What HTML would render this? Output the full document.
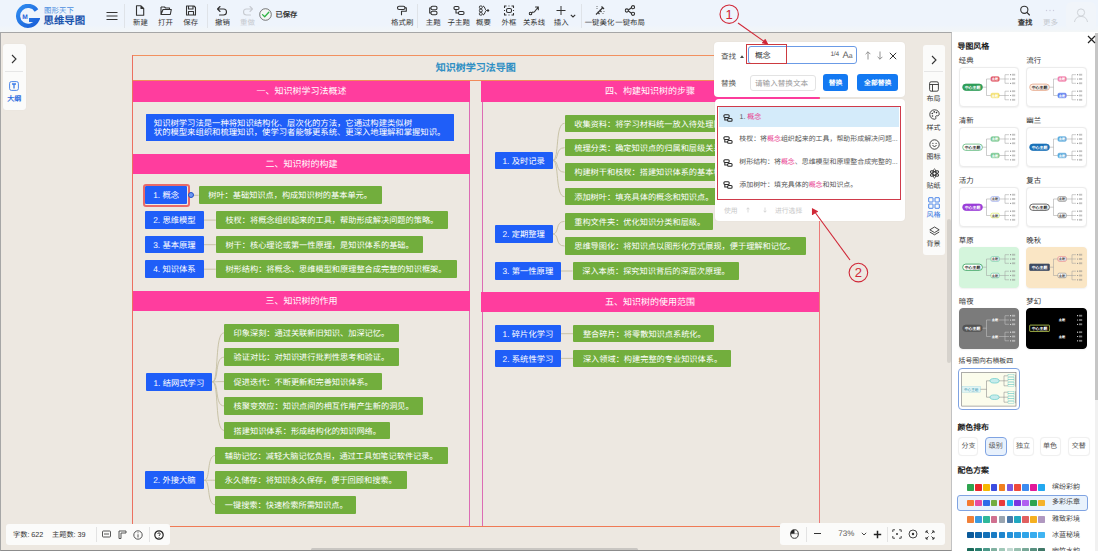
<!DOCTYPE html>
<html lang="zh-CN"><head><meta charset="utf-8">
<style>
*{margin:0;padding:0;box-sizing:border-box}
html,body{width:1098px;height:551px;overflow:hidden;text-rendering:geometricPrecision;font-family:"Liberation Sans",sans-serif;background:#ede8e1;position:relative}
.a{position:absolute}
#tb{left:0;top:0;width:1098px;height:33px;background:linear-gradient(#eef4fc 0,#eef4fc 25px,#f3f6f7 32px)}
.tl{position:absolute;top:17.8px;font-size:7.4px;color:#333;font-weight:500;white-space:nowrap;transform:translateX(-50%);line-height:9px}
.ti{position:absolute;top:5px;transform:translateX(-50%)}
.dv{position:absolute;top:4px;width:1px;height:24px;background:#dfe3e8}
#canvas{left:0;top:33px;width:951px;height:518px;background:#ede8e1}
.pk{background:#ff3d9e;color:#fff;font-size:9px;font-weight:500;text-align:center;white-space:nowrap}
.bn{background:#1f5ef8;color:#fff;font-size:8.3px;font-weight:500;padding-left:8px;white-space:nowrap;overflow:hidden;border-radius:1px}
.gn{background:#72ae3d;color:#fff;font-size:8.2px;font-weight:500;padding-left:9.6px;white-space:nowrap;overflow:hidden;border-radius:1px}
</style></head><body>
<!-- TOOLBAR -->
<div id="tb" class="a">
 <svg class="a" style="left:15px;top:4px" width="25" height="25" viewBox="0 0 25 25">
  <defs><linearGradient id="lg" x1="0" y1="0" x2="1" y2="1"><stop offset="0" stop-color="#2f8cf0"/><stop offset="1" stop-color="#1a5fd8"/></linearGradient></defs>
  <path d="M21.5 6.5 A10 10 0 1 0 22.2 16 L14 16" fill="none" stroke="url(#lg)" stroke-width="4.2"/>
  <text x="10" y="14.8" font-size="6.6" font-weight="bold" fill="#1a5fd8" text-anchor="middle" font-family="Liberation Sans">M</text>
 </svg>
 <div class="a" style="left:44px;top:5.7px;font-size:7.4px;color:#4d8fe0;line-height:9px;letter-spacing:0.1px">图形天下</div>
 <div class="a" style="left:43.5px;top:15.5px;font-size:10.4px;color:#1c55ae;font-weight:bold;line-height:12px">思维导图</div>
 <svg class="a" style="left:106px;top:11px" width="12" height="10"><path d="M0.5 1.5H11.5M0.5 5H11.5M0.5 8.5H11.5" stroke="#333" stroke-width="1.2"/></svg>
 <div class="dv" style="left:124px"></div>
 <!-- 新建 -->
 <svg class="ti" style="left:140.4px" width="10" height="11" viewBox="0 0 10 11"><path d="M1.5 0.8H6L8.7 3.5V10.2H1.5Z M6 0.8V3.5H8.7" fill="none" stroke="#333" stroke-width="1.1" stroke-linejoin="round"/></svg>
 <div class="tl" style="left:140.4px">新建</div>
 <svg class="ti" style="left:165.5px" width="12" height="11" viewBox="0 0 12 11"><path d="M1 2V9.5H10.3L11.3 4.5H3L1 9.5 M1 2H4.5L5.5 3H9.5V4.5" fill="none" stroke="#333" stroke-width="1.1" stroke-linejoin="round"/></svg>
 <div class="tl" style="left:165.5px">打开</div>
 <svg class="ti" style="left:190.7px" width="11" height="11" viewBox="0 0 11 11"><path d="M1 1H8.5L10 2.5V10H1Z M3 1V4H7.5V1 M3 10V6.5H8V10" fill="none" stroke="#333" stroke-width="1.1" stroke-linejoin="round"/></svg>
 <div class="tl" style="left:190.7px">保存</div>
 <div class="dv" style="left:207px"></div>
 <svg class="ti" style="left:222.4px" width="11" height="11" viewBox="0 0 11 11"><path d="M3.5 1.5L1 4L3.5 6.5 M1 4H7A3 3 0 0 1 7 10H3" fill="none" stroke="#333" stroke-width="1.1" stroke-linecap="round" stroke-linejoin="round"/></svg>
 <div class="tl" style="left:222.4px">撤销</div>
 <svg class="ti" style="left:247.5px" width="11" height="11" viewBox="0 0 11 11"><path d="M7.5 1.5L10 4L7.5 6.5 M10 4H4A3 3 0 0 0 4 10H8" fill="none" stroke="#c8ccd2" stroke-width="1.1" stroke-linecap="round" stroke-linejoin="round"/></svg>
 <div class="tl" style="left:247.5px;color:#c5c9cf">重做</div>
 <svg class="a" style="left:259px;top:8px" width="13" height="13" viewBox="0 0 13 13"><circle cx="6.5" cy="6.5" r="5.8" fill="#f4f7f4" stroke="#555" stroke-width="0.8"/><path d="M3.5 6.6L5.7 8.8L9.8 4.3" fill="none" stroke="#2fb344" stroke-width="1.3" stroke-linecap="round" stroke-linejoin="round"/></svg>
 <div class="a" style="left:275.5px;top:9.5px;font-size:7.3px;color:#333;font-weight:bold;line-height:9px">已保存</div>
 <!-- middle -->
 <svg class="ti" style="left:402.2px" width="11" height="11" viewBox="0 0 11 11"><rect x="1" y="1.2" width="7.5" height="3.3" rx="1.6" fill="none" stroke="#333" stroke-width="1.1"/><path d="M8.5 2.8H9.8V6.2H5V9.8" fill="none" stroke="#333" stroke-width="1.1" stroke-linejoin="round" stroke-linecap="round"/></svg>
 <div class="tl" style="left:402.2px">格式刷</div>
 <div class="dv" style="left:417.3px"></div>
 <svg class="ti" style="left:433.2px" width="11" height="11" viewBox="0 0 11 11"><rect x="3.5" y="1.3" width="6" height="3.4" rx="1.5" fill="none" stroke="#333" stroke-width="1.1"/><rect x="3.5" y="6.3" width="6" height="3.4" rx="1.5" fill="none" stroke="#333" stroke-width="1.1"/><path d="M3.5 3H2.2V8H3.5" fill="none" stroke="#333" stroke-width="1.1"/></svg>
 <div class="tl" style="left:433.2px">主题</div>
 <svg class="ti" style="left:458.7px" width="12" height="11" viewBox="0 0 12 11"><rect x="1" y="1.5" width="5" height="3" rx="1.2" fill="none" stroke="#333" stroke-width="1.1"/><rect x="5.5" y="6.5" width="5.5" height="3" rx="1.2" fill="none" stroke="#333" stroke-width="1.1"/><path d="M3 4.5V8H5.5" fill="none" stroke="#333" stroke-width="1.1"/></svg>
 <div class="tl" style="left:458.7px">子主题</div>
 <svg class="ti" style="left:483.5px" width="11" height="11" viewBox="0 0 11 11"><rect x="0.8" y="1" width="3" height="2.5" rx="1" fill="none" stroke="#333" stroke-width="1"/><rect x="0.8" y="4.3" width="3" height="2.5" rx="1" fill="none" stroke="#333" stroke-width="1"/><rect x="0.8" y="7.6" width="3" height="2.5" rx="1" fill="none" stroke="#333" stroke-width="1"/><path d="M4.5 1C6.5 1 6.5 5.5 8 5.5C6.5 5.5 6.5 10 4.5 10 M8 5.5H10.5 M9 4L10.5 5.5L9 7" fill="none" stroke="#333" stroke-width="1"/></svg>
 <div class="tl" style="left:483.5px">概要</div>
 <svg class="ti" style="left:509px" width="11" height="11" viewBox="0 0 11 11"><rect x="3" y="3.5" width="5" height="4" rx="1.5" fill="none" stroke="#333" stroke-width="1.1"/><path d="M1 3V1H3 M8 1H10V3 M10 8V10H8 M3 10H1V8 M5 1H6 M5 10H6 M1 5V6 M10 5V6" fill="none" stroke="#333" stroke-width="1.1"/></svg>
 <div class="tl" style="left:509px">外框</div>
 <svg class="ti" style="left:534px" width="11" height="11" viewBox="0 0 11 11"><circle cx="2" cy="8.5" r="1.3" fill="none" stroke="#333" stroke-width="1.1"/><path d="M3.2 7.6C5 6 5 9 7 5.5L9.8 2 M7 2H9.8V4.8" fill="none" stroke="#333" stroke-width="1.1" stroke-linecap="round"/></svg>
 <div class="tl" style="left:534px">关系线</div>
 <svg class="ti" style="left:561.2px" width="11" height="11" viewBox="0 0 11 11"><path d="M5.5 1V10 M1 5.5H10" stroke="#333" stroke-width="1"/></svg>
 <div class="tl" style="left:561.2px">插入</div>
 <svg class="a" style="left:569.5px;top:13.5px" width="6" height="4"><path d="M0.8 0.8L3 3L5.2 0.8" fill="none" stroke="#333" stroke-width="1.1"/></svg>
 <div class="dv" style="left:580.6px"></div>
 <svg class="ti" style="left:599.5px" width="11" height="11" viewBox="0 0 11 11"><path d="M1.5 9.5L8.5 2.5 M3 7L5 9 M5 5L7 7" fill="none" stroke="#333" stroke-width="1.1"/><path d="M2 2L3 1M3 3L2 4M8 8l1 1M9 7l1-1" stroke="#333" stroke-width="0.7"/><path d="M7 1.5L9.5 4" stroke="#333" stroke-width="1.3"/></svg>
 <div class="tl" style="left:599.5px">一键美化</div>
 <svg class="ti" style="left:630.1px" width="11" height="11" viewBox="0 0 11 11"><circle cx="2.3" cy="5.5" r="1.6" fill="none" stroke="#333" stroke-width="1.1"/><circle cx="8.5" cy="2.2" r="1.6" fill="none" stroke="#333" stroke-width="1.1"/><circle cx="8.5" cy="8.8" r="1.6" fill="none" stroke="#333" stroke-width="1.1"/><path d="M3.8 5L7 2.8 M3.8 6L7 8.2" stroke="#333" stroke-width="1.1"/></svg>
 <div class="tl" style="left:630.1px">一键布局</div>
 <!-- right -->
 <svg class="ti" style="left:1025.1px;top:5px" width="11" height="11" viewBox="0 0 11 11"><circle cx="4.8" cy="4.8" r="3.6" fill="none" stroke="#333" stroke-width="1.1"/><path d="M7.5 7.5L10 10" stroke="#333" stroke-width="1.1" stroke-linecap="round"/></svg>
 <div class="tl" style="left:1025.1px;font-weight:bold">查找</div>
 <svg class="ti" style="left:1050.4px;top:9px" width="10" height="3"><circle cx="1.5" cy="1.5" r="0.7" fill="#ccd"/><circle cx="5" cy="1.5" r="0.7" fill="#ccd"/><circle cx="8.5" cy="1.5" r="0.7" fill="#ccd"/></svg>
 <div class="tl" style="left:1050.4px;color:#c5c9cf">更多</div>
 <div class="a" style="left:1066px;top:2px;width:30px;height:28px;border-radius:6px;background:#f1f5fa"></div>
 <svg class="a" style="left:1073px;top:7px" width="16" height="16" viewBox="0 0 16 16"><circle cx="8" cy="5.5" r="3.6" fill="none" stroke="#cfd3d8" stroke-width="1"/><path d="M1.5 15C2.5 10.5 5 9.5 8 9.5S13.5 10.5 14.5 15" fill="none" stroke="#cfd3d8" stroke-width="1"/></svg>
</div>
<div id="canvas" class="a"></div>
<svg class="a" style="left:0;top:0" width="1098" height="551"><g fill="none" stroke="#c4bea0" stroke-width="0.9"><path d="M190 195.3H198.6"/><path d="M203.7 220.10000000000002H215.8"/><path d="M203.7 244.70000000000002H215.8"/><path d="M203.7 269.2H215.8"/><path d="M212.3 381.8C219.32 381.8 214.3 332.8 224 332.8"/><path d="M212.3 381.8C219.32 381.8 214.3 357.2 224 357.2"/><path d="M212.3 381.8C219.32 381.8 214.3 381.6 224 381.6"/><path d="M212.3 381.8C219.32 381.8 214.3 405.90000000000003 224 405.90000000000003"/><path d="M212.3 381.8C219.32 381.8 214.3 430.40000000000003 224 430.40000000000003"/><path d="M204.3 480.3C210.84 480.3 206.3 455.5 215.2 455.5"/><path d="M204.3 480.3C210.84 480.3 206.3 480.2 215.2 480.2"/><path d="M204.3 480.3C210.84 480.3 206.3 504.8 215.2 504.8"/><path d="M552.6 160.4C559.8000000000001 160.4 554.6 123.3 564.6 123.3"/><path d="M552.6 160.4C559.8000000000001 160.4 554.6 147.70000000000002 564.6 147.70000000000002"/><path d="M552.6 160.4C559.8000000000001 160.4 554.6 172.20000000000002 564.6 172.20000000000002"/><path d="M552.6 160.4C559.8000000000001 160.4 554.6 196.70000000000002 564.6 196.70000000000002"/><path d="M552.6 234C559.8000000000001 234 554.6 221.4 564.6 221.4"/><path d="M552.6 234C559.8000000000001 234 554.6 246.0 564.6 246.0"/><path d="M560.6 271H572.6"/><path d="M560.8 333.7H573.3"/><path d="M560.8 358.4H573.3"/></g></svg>
<div class="a" style="left:132px;top:55px;width:687.5px;height:472px;border:1px solid #f2905f"></div>
<div class="a" style="left:132px;top:56px;width:687.5px;height:25px;line-height:25px;text-align:center;font-size:10px;font-weight:bold;color:#2f8fc4">知识树学习法导图</div>
<div class="a" style="left:132px;top:80px;width:687.5px;height:1.2px;background:#f28a5a"></div>
<div class="a" style="left:469px;top:81px;width:1px;height:446px;background:#dc6cb4"></div>
<div class="a" style="left:481.5px;top:81px;width:1px;height:446px;background:#dc6cb4"></div>
<div class="a" style="left:132px;top:55px;width:1px;height:472px;background:#ec7060"></div>
<div class="a" style="left:818.5px;top:55px;width:1px;height:472px;background:#ec7a78"></div>
<div class="a" style="left:132px;top:526px;width:687.5px;height:1px;background:#f07a55"></div>
<div class="a pk" style="left:133px;top:81px;width:337px;height:20.5px;line-height:20.5px">一、知识树学习法概述</div>
<div class="a pk" style="left:133px;top:153.5px;width:337px;height:20.0px;line-height:20.0px">二、知识树的构建</div>
<div class="a pk" style="left:133px;top:291px;width:337px;height:20px;line-height:20px">三、知识树的作用</div>
<div class="a pk" style="left:481px;top:81px;width:338px;height:20.5px;line-height:20.5px">四、构建知识树的步骤</div>
<div class="a pk" style="left:481px;top:292px;width:338px;height:20px;line-height:20px">五、知识树的使用范围</div>
<div class="a bn" style="left:145.5px;top:114px;width:308.5px;height:27px;line-height:9.6px;padding:4.5px 0 0 8.3px;white-space:normal;font-size:8.33px;border-radius:0.5px">知识树学习法是一种将知识结构化、层次化的方法，它通过构建类似树<br>状的模型来组织和梳理知识，使学习者能够更系统、更深入地理解和掌握知识。</div>
<div class="a bn" style="left:145.2px;top:186.4px;width:42.0px;height:17.9px;line-height:19.9px">1. 概念</div>
<div class="a" style="left:142.5px;top:184px;width:47.5px;height:23.2px;border:2px solid #e86a6a;border-radius:3px"></div>
<div class="a gn" style="left:198.6px;top:186.4px;width:183.3px;height:17.6px;line-height:19.8px">树叶：基础知识点，构成知识树的基本单元。</div>
<div class="a" style="left:188.3px;top:192.4px;width:5.8px;height:5.8px;border-radius:3px;background:#6d9af2;border:1.4px solid #1f4fc8"></div>
<div class="a bn" style="left:145.2px;top:211.3px;width:58.5px;height:17.6px;line-height:19.6px">2. 思维模型</div>
<div class="a gn" style="left:215.8px;top:211.3px;width:232.4px;height:17.6px;line-height:19.8px">枝杈：将概念组织起来的工具，帮助形成解决问题的策略。</div>
<div class="a bn" style="left:145.2px;top:235.9px;width:58.5px;height:17.6px;line-height:19.6px">3. 基本原理</div>
<div class="a gn" style="left:215.8px;top:235.9px;width:207.7px;height:17.6px;line-height:19.8px">树干：核心理论或第一性原理，是知识体系的基础。</div>
<div class="a bn" style="left:145.2px;top:260.4px;width:58.5px;height:17.6px;line-height:19.6px">4. 知识体系</div>
<div class="a gn" style="left:215.8px;top:260.4px;width:241.0px;height:17.6px;line-height:19.8px">树形结构：将概念、思维模型和原理整合成完整的知识框架。</div>
<div class="a bn" style="left:145.5px;top:372.8px;width:66.8px;height:18.0px;line-height:20.0px">1. 结网式学习</div>
<div class="a gn" style="left:224px;top:324px;width:174.5px;height:17.6px;line-height:19.8px">印象深刻：通过关联新旧知识、加深记忆。</div>
<div class="a gn" style="left:224px;top:348.4px;width:174.5px;height:17.6px;line-height:19.8px">验证对比：对知识进行批判性思考和验证。</div>
<div class="a gn" style="left:224px;top:372.8px;width:157.7px;height:17.6px;line-height:19.8px">促进迭代：不断更新和完善知识体系。</div>
<div class="a gn" style="left:224px;top:397.1px;width:198.8px;height:17.6px;line-height:19.8px">核聚变效应：知识点间的相互作用产生新的洞见。</div>
<div class="a gn" style="left:224px;top:421.6px;width:165.7px;height:17.6px;line-height:19.8px">搭建知识体系：形成结构化的知识网络。</div>
<div class="a bn" style="left:145.2px;top:471.4px;width:59.1px;height:17.8px;line-height:19.8px">2. 外接大脑</div>
<div class="a gn" style="left:215.2px;top:446.7px;width:233.3px;height:17.6px;line-height:19.8px">辅助记忆：减轻大脑记忆负担，通过工具如笔记软件记录。</div>
<div class="a gn" style="left:215.2px;top:471.4px;width:191.7px;height:17.6px;line-height:19.8px">永久储存：将知识永久保存，便于回顾和搜索。</div>
<div class="a gn" style="left:215.2px;top:496px;width:140.5px;height:17.6px;line-height:19.8px">一键搜索：快速检索所需知识点。</div>
<div class="a bn" style="left:494.5px;top:151.6px;width:58.1px;height:17.6px;line-height:19.6px">1. 及时记录</div>
<div class="a gn" style="left:564.6px;top:114.5px;width:175.0px;height:17.6px;line-height:19.8px">收集资料：将学习材料统一放入待处理区。</div>
<div class="a gn" style="left:564.6px;top:138.9px;width:175.0px;height:17.6px;line-height:19.8px">梳理分类：确定知识点的归属和层级关系。</div>
<div class="a gn" style="left:564.6px;top:163.4px;width:183.2px;height:17.6px;line-height:19.8px">构建树干和枝杈：搭建知识体系的基本框架。</div>
<div class="a gn" style="left:564.6px;top:187.9px;width:158.6px;height:17.6px;line-height:19.8px">添加树叶：填充具体的概念和知识点。</div>
<div class="a bn" style="left:494.5px;top:225.2px;width:58.1px;height:17.6px;line-height:19.6px">2. 定期整理</div>
<div class="a gn" style="left:564.6px;top:212.6px;width:148.9px;height:17.6px;line-height:19.8px">重构文件夹：优化知识分类和层级。</div>
<div class="a gn" style="left:564.6px;top:237.2px;width:241.4px;height:17.6px;line-height:19.8px">思维导图化：将知识点以图形化方式展现，便于理解和记忆。</div>
<div class="a bn" style="left:494.5px;top:262.2px;width:66.1px;height:17.6px;line-height:19.6px">3. 第一性原理</div>
<div class="a gn" style="left:572.6px;top:262.2px;width:166.3px;height:17.6px;line-height:19.8px">深入本质：探究知识背后的深层次原理。</div>
<div class="a bn" style="left:494.6px;top:324.9px;width:66.2px;height:17.6px;line-height:19.6px">1. 碎片化学习</div>
<div class="a gn" style="left:573.3px;top:324.9px;width:141.0px;height:17.6px;line-height:19.8px">整合碎片：将零散知识点系统化。</div>
<div class="a bn" style="left:494.6px;top:349.6px;width:66.2px;height:17.6px;line-height:19.6px">2. 系统性学习</div>
<div class="a gn" style="left:573.3px;top:349.6px;width:158.0px;height:17.6px;line-height:19.8px">深入领域：构建完整的专业知识体系。</div>
<!-- left mini panel -->
<div class="a" style="left:3px;top:44px;width:22.5px;height:66px;background:#fbfbfa;border-radius:3px;box-shadow:0 0 1px rgba(0,0,0,0.08)"></div>
<svg class="a" style="left:10px;top:54px" width="8" height="10"><path d="M2 1L6 5L2 9" fill="none" stroke="#333" stroke-width="1.1"/></svg>
<div class="a" style="left:5px;top:71px;width:18px;height:1px;background:#e6e6e6"></div>
<svg class="a" style="left:9px;top:80.5px" width="10" height="10" viewBox="0 0 10 10"><rect x="0.6" y="0.6" width="8.8" height="8.8" rx="1.8" fill="none" stroke="#3a7be8" stroke-width="0.9"/><path d="M3 3H7M5 3V7.6" stroke="#3a7be8" stroke-width="1.3"/></svg>
<div class="a" style="left:3px;top:94.5px;width:22.5px;text-align:center;font-size:7px;line-height:9px;color:#2f6fe0;font-weight:bold">大纲</div>

<!-- right vertical toolbar -->
<div class="a" style="left:922.5px;top:44.5px;width:22px;height:210px;background:#fbfbfa;border-radius:3px"></div>
<svg class="a" style="left:929.5px;top:55px" width="8" height="10"><path d="M2 1L6 5L2 9" fill="none" stroke="#333" stroke-width="1.1"/></svg>
<div class="a" style="left:924px;top:70.5px;width:19px;height:1px;background:#e6e6e6"></div>
<svg class="a" style="left:928.5px;top:81px" width="10" height="11" viewBox="0 0 10 11"><rect x="0.6" y="0.8" width="8.8" height="9.4" rx="1.5" fill="none" stroke="#333" stroke-width="0.9"/><path d="M0.6 3.5H9.4M3.5 3.5V10.2" stroke="#333" stroke-width="0.9"/></svg>
<div class="a" style="left:922.5px;top:94.5px;width:22px;text-align:center;font-size:7px;line-height:9px;color:#333">布局</div>
<svg class="a" style="left:928.5px;top:109px" width="11" height="11" viewBox="0 0 11 11"><path d="M5.5 0.8C8.5 0.8 10.2 2.8 10.2 5C10.2 6.5 9 7 8 6.8C6.8 6.6 6.3 7.5 6.8 8.5C7.3 9.6 6.5 10.2 5.5 10.2C2.8 10.2 0.8 8 0.8 5.5C0.8 2.9 2.8 0.8 5.5 0.8Z" fill="none" stroke="#333" stroke-width="0.9"/><circle cx="3.3" cy="4.5" r="0.8" fill="#333"/><circle cx="5.2" cy="2.9" r="0.8" fill="#333"/><circle cx="7.5" cy="3.6" r="0.8" fill="#333"/><circle cx="3.5" cy="7" r="0.8" fill="#333"/></svg>
<div class="a" style="left:922.5px;top:124px;width:22px;text-align:center;font-size:7px;line-height:9px;color:#333">样式</div>
<svg class="a" style="left:928.5px;top:139px" width="11" height="11" viewBox="0 0 11 11"><circle cx="5.5" cy="5.5" r="4.7" fill="none" stroke="#333" stroke-width="0.9"/><circle cx="3.9" cy="4.3" r="0.6" fill="#333"/><circle cx="7.1" cy="4.3" r="0.6" fill="#333"/><path d="M3.5 6.5Q5.5 8.5 7.5 6.5" fill="none" stroke="#333" stroke-width="0.9"/></svg>
<div class="a" style="left:922.5px;top:153px;width:22px;text-align:center;font-size:7px;line-height:9px;color:#333">图标</div>
<svg class="a" style="left:928.5px;top:168px" width="11" height="11" viewBox="0 0 11 11"><g fill="none" stroke="#333" stroke-width="1"><ellipse cx="5.5" cy="5.5" rx="1.6" ry="4.5"/><ellipse cx="5.5" cy="5.5" rx="1.6" ry="4.5" transform="rotate(60 5.5 5.5)"/><ellipse cx="5.5" cy="5.5" rx="1.6" ry="4.5" transform="rotate(-60 5.5 5.5)"/></g></svg>
<div class="a" style="left:922.5px;top:182px;width:22px;text-align:center;font-size:7px;line-height:9px;color:#333">贴纸</div>
<svg class="a" style="left:928px;top:196.5px" width="12" height="12" viewBox="0 0 12 12"><g fill="none" stroke="#3a7be8" stroke-width="0.9"><rect x="0.7" y="0.7" width="4.3" height="4.3" rx="0.3"/><rect x="7" y="0.7" width="4.3" height="4.3" rx="0.3"/><rect x="0.7" y="7" width="4.3" height="4.3" rx="0.3"/><rect x="7" y="7" width="4.3" height="4.3" rx="0.3"/></g></svg>
<div class="a" style="left:922.5px;top:211px;width:22px;text-align:center;font-size:7px;line-height:9px;color:#2f6fe0">风格</div>
<svg class="a" style="left:928.5px;top:225.5px" width="11" height="11" viewBox="0 0 11 11"><g fill="none" stroke="#333" stroke-width="0.9" stroke-linejoin="round"><path d="M5.5 1L10.2 3.8L5.5 6.6L0.8 3.8Z"/><path d="M0.8 6L5.5 8.8L10.2 6"/></g></svg>
<div class="a" style="left:922.5px;top:239.5px;width:22px;text-align:center;font-size:7px;line-height:9px;color:#333">背景</div>

<!-- canvas scrollbars -->
<div class="a" style="left:947px;top:219px;width:3.5px;height:144px;background:#d6d2cc;border-radius:2px"></div>
<div class="a" style="left:311px;top:547.5px;width:327px;height:3.5px;background:#c9c6c2;border-radius:2px"></div>
<div class="a" style="left:0;top:32px;width:952px;height:519px;border:1px solid #a6a6a6;border-right:1.5px solid #c2c2c2;border-bottom:1.5px solid #8c8c8c"></div>

<!-- status bar -->
<div class="a" style="left:6px;top:523.7px;width:163.5px;height:21px;background:#fbfbfa;border-radius:3px"></div>
<div class="a" style="left:13px;top:530px;font-size:7.2px;line-height:9px;color:#333;white-space:nowrap">字数: 622</div>
<div class="a" style="left:52px;top:530px;font-size:7.2px;line-height:9px;color:#333;white-space:nowrap">主题数: 39</div>
<div class="a" style="left:95.5px;top:527px;width:1px;height:15px;background:#e3e3e3"></div>
<svg class="a" style="left:101.5px;top:530px" width="9" height="8" viewBox="0 0 9 8"><rect x="0.5" y="1" width="8" height="6" rx="0.8" fill="none" stroke="#444" stroke-width="0.9"/><path d="M2 4H7" stroke="#444" stroke-width="0.9"/></svg>
<svg class="a" style="left:117.5px;top:529.5px" width="9" height="9" viewBox="0 0 9 9"><path d="M1 8.5V1H8V3H3V8.5Z" fill="none" stroke="#444" stroke-width="0.9"/></svg>
<svg class="a" style="left:133px;top:529.5px" width="10" height="10" viewBox="0 0 10 10"><circle cx="5" cy="5" r="4.2" fill="none" stroke="#444" stroke-width="0.9"/><path d="M5 4.3V7.5" stroke="#444" stroke-width="0.9"/><circle cx="5" cy="2.8" r="0.5" fill="#444"/></svg>
<div class="a" style="left:149px;top:527px;width:1px;height:15px;background:#e3e3e3"></div>
<svg class="a" style="left:153.5px;top:529.5px" width="10" height="10" viewBox="0 0 10 10"><circle cx="5" cy="5" r="4.2" fill="none" stroke="#222" stroke-width="1.2"/><path d="M3.7 4C3.7 2.5 6.3 2.5 6.3 4C6.3 5 5 5 5 6" fill="none" stroke="#222" stroke-width="0.9"/><circle cx="5" cy="7.4" r="0.5" fill="#222"/></svg>

<!-- zoom bar -->
<div class="a" style="left:780px;top:523px;width:164.5px;height:21.5px;background:#fbfbfa;border-radius:3px"></div>
<svg class="a" style="left:789.5px;top:529.3px" width="9" height="10" viewBox="0 0 9 10"><ellipse cx="4.5" cy="5" rx="3.8" ry="4.3" fill="none" stroke="#333" stroke-width="1"/><path d="M4.5 4.7V0.7A3.8 4 0 0 0 0.7 4.7Z" fill="#222"/><path d="M0.7 4.7H8.3" stroke="#555" stroke-width="0.5"/></svg>
<div class="a" style="left:805.5px;top:527px;width:1px;height:15px;background:#e3e3e3"></div>
<div class="a" style="left:814px;top:532.9px;width:7px;height:1.6px;background:#333"></div>
<div class="a" style="left:838.3px;top:529px;font-size:8px;line-height:10px;color:#555;white-space:nowrap">73%</div>
<svg class="a" style="left:860.5px;top:532px" width="6" height="4"><path d="M0.8 0.8L3 3L5.2 0.8" fill="none" stroke="#333" stroke-width="0.9"/></svg>
<svg class="a" style="left:872.5px;top:529.5px" width="9" height="9"><path d="M4.5 0.8V8.2M0.8 4.5H8.2" stroke="#222" stroke-width="1.5"/></svg>
<div class="a" style="left:886.5px;top:527px;width:1px;height:15px;background:#e3e3e3"></div>
<svg class="a" style="left:892px;top:529px" width="10" height="10" viewBox="0 0 10 10"><path d="M0.8 3V0.8H3M7 0.8H9.2V3M9.2 7V9.2H7M3 9.2H0.8V7" fill="none" stroke="#333" stroke-width="0.9"/><circle cx="5" cy="5" r="1" fill="#333"/></svg>
<svg class="a" style="left:908px;top:529px" width="10" height="10" viewBox="0 0 10 10"><circle cx="5" cy="5" r="4" fill="none" stroke="#333" stroke-width="0.9"/><circle cx="5" cy="5" r="1.2" fill="#333"/></svg>
<svg class="a" style="left:925px;top:529.5px" width="10" height="10" viewBox="0 0 10 10"><path d="M1 1L3.5 3.5M9 1L6.5 3.5M1 9L3.5 6.5M9 9L6.5 6.5 M1 3V1H3 M7 1H9V3 M9 7V9H7 M3 9H1V7" fill="none" stroke="#333" stroke-width="0.95"/></svg>
<!-- search upper card -->
<div class="a" style="left:714px;top:41.5px;width:190.5px;height:55px;background:#fff;border-radius:4px;box-shadow:0 0 2px rgba(0,0,0,0.06)"></div>
<div class="a" style="left:721px;top:51.5px;font-size:7.6px;line-height:9px;color:#555;white-space:nowrap">查找</div>
<svg class="a" style="left:739.5px;top:54.5px" width="4" height="3"><path d="M0 3L2 0.3L4 3Z" fill="#444"/></svg>
<div class="a" style="left:748px;top:46.3px;width:109px;height:17.7px;border:1px solid #6b9be6;border-radius:3px;background:#fff"></div>
<div class="a" style="left:755px;top:51px;font-size:7.8px;line-height:9px;color:#333;white-space:nowrap">概念</div>
<div class="a" style="left:830.5px;top:51px;font-size:6.6px;line-height:8px;color:#555;white-space:nowrap;letter-spacing:-0.3px">1/4</div>
<div class="a" style="left:842.5px;top:50px;font-size:9.5px;line-height:11px;color:#666;white-space:nowrap">A<span style="font-size:7px">a</span></div>
<svg class="a" style="left:864.5px;top:51px" width="6" height="9"><path d="M3 8.5V0.8M0.6 3.2L3 0.8L5.4 3.2" fill="none" stroke="#888" stroke-width="0.9"/></svg>
<svg class="a" style="left:876.7px;top:51px" width="6" height="9"><path d="M3 0.5V8.2M0.6 5.8L3 8.2L5.4 5.8" fill="none" stroke="#888" stroke-width="0.9"/></svg>
<svg class="a" style="left:889px;top:52px" width="8" height="8"><path d="M0.8 0.8L7.2 7.2M7.2 0.8L0.8 7.2" stroke="#333" stroke-width="1"/></svg>
<div class="a" style="left:721px;top:78.5px;font-size:7.6px;line-height:9px;color:#555;white-space:nowrap">替换</div>
<div class="a" style="left:750px;top:74.6px;width:65.5px;height:16.5px;border:1px solid #e3e3e3;border-radius:3px;background:#fff"></div>
<div class="a" style="left:755px;top:78.5px;font-size:7.6px;line-height:9px;color:#999;white-space:nowrap">请输入替换文本</div>
<div class="a" style="left:823.3px;top:74px;width:24.5px;height:17.4px;background:#1379f2;border-radius:3px;color:#fff;font-size:6.8px;line-height:19.4px;text-align:center;font-weight:bold">替换</div>
<div class="a" style="left:857.2px;top:74px;width:41px;height:17.4px;background:#1379f2;border-radius:3px;color:#fff;font-size:6.8px;line-height:19.4px;text-align:center;font-weight:bold">全部替换</div>

<div class="a" style="left:746.2px;top:43.6px;width:40.5px;height:20.8px;border:1.6px solid #cc3a40"></div>
<!-- search lower card -->
<div class="a" style="left:714.5px;top:98.5px;width:190px;height:122.8px;background:#fff;border-radius:4px;box-shadow:0 0 2px rgba(0,0,0,0.06)"></div>
<div class="a" style="left:718.5px;top:107.3px;width:180px;height:20.2px;background:#d4ebfa"></div>
<div class="a" style="left:717px;top:106.2px;width:183.5px;height:93.6px;border:1.5px solid #cf3a4a"></div>
<svg class="a" style="left:723px;top:113.5px" width="10" height="8" viewBox="0 0 10 8"><g fill="none" stroke="#2a2a2a" stroke-width="1.05"><rect x="0.9" y="0.8" width="5.3" height="2.6" rx="1"/><rect x="4.6" y="4.5" width="4.5" height="2.8" rx="1"/><path d="M1.8 3.4V5.9H4.6"/></g></svg>
<div class="a" style="left:739.5px;top:113px;font-size:7px;line-height:9px;color:#555;white-space:nowrap">1. <span style="color:#e8408f">概念</span></div>
<svg class="a" style="left:723px;top:135.5px" width="10" height="8" viewBox="0 0 10 8"><g fill="none" stroke="#2a2a2a" stroke-width="1.05"><rect x="0.9" y="0.8" width="5.3" height="2.6" rx="1"/><rect x="4.6" y="4.5" width="4.5" height="2.8" rx="1"/><path d="M1.8 3.4V5.9H4.6"/></g></svg>
<div class="a" style="left:739.3px;top:135.2px;font-size:6.95px;line-height:9px;color:#555;white-space:nowrap">枝杈：将<span style="color:#e8408f">概念</span>组织起来的工具，帮助形成解决问题...</div>
<svg class="a" style="left:723px;top:158.5px" width="10" height="8" viewBox="0 0 10 8"><g fill="none" stroke="#2a2a2a" stroke-width="1.05"><rect x="0.9" y="0.8" width="5.3" height="2.6" rx="1"/><rect x="4.6" y="4.5" width="4.5" height="2.8" rx="1"/><path d="M1.8 3.4V5.9H4.6"/></g></svg>
<div class="a" style="left:739.3px;top:158.2px;font-size:6.95px;line-height:9px;color:#555;white-space:nowrap">树形结构：将<span style="color:#e8408f">概念</span>、思维模型和原理整合成完整的...</div>
<svg class="a" style="left:723px;top:180.5px" width="10" height="8" viewBox="0 0 10 8"><g fill="none" stroke="#2a2a2a" stroke-width="1.05"><rect x="0.9" y="0.8" width="5.3" height="2.6" rx="1"/><rect x="4.6" y="4.5" width="4.5" height="2.8" rx="1"/><path d="M1.8 3.4V5.9H4.6"/></g></svg>
<div class="a" style="left:739.3px;top:180.5px;font-size:6.95px;line-height:9px;color:#555;white-space:nowrap">添加树叶：填充具体的<span style="color:#e8408f">概念</span>和知识点。</div>
<div class="a" style="left:724px;top:206.5px;font-size:6.8px;line-height:9px;color:#c8c8c8;white-space:nowrap">使用</div>
<div class="a" style="left:741px;top:204px;width:14px;height:13px;border-radius:2px;background:#fff"></div>
<svg class="a" style="left:746px;top:207px" width="4" height="6"><path d="M2 5.5V0.8M0.5 2.3L2 0.8L3.5 2.3" fill="none" stroke="#ccc" stroke-width="0.7"/></svg>
<div class="a" style="left:758px;top:204px;width:14px;height:13px;border-radius:2px;background:#fff"></div>
<svg class="a" style="left:763px;top:207px" width="4" height="6"><path d="M2 0.5V5.2M0.5 3.7L2 5.2L3.5 3.7" fill="none" stroke="#ccc" stroke-width="0.7"/></svg>
<div class="a" style="left:775px;top:206.5px;font-size:6.8px;line-height:9px;color:#c8c8c8;white-space:nowrap">进行选择</div>

<!-- annotations -->
<svg class="a" style="left:0;top:0" width="1098" height="551"><g fill="none" stroke="#d02838" stroke-width="1.1">
<circle cx="729.2" cy="14.2" r="9.2"/>
<path d="M738 23L767 43.5"/>
<path d="M762 42.8L767.5 44L765 39.3" fill="#d02838"/>
<circle cx="858.4" cy="272.6" r="9.3"/>
<path d="M850 260L813 209.5"/>
<path d="M812.5 215L812.5 209L817.8 211.8" fill="#d02838"/>
</g>
<text x="729.2" y="19" font-size="13" text-anchor="middle" fill="#d02838" font-family="Liberation Sans">1</text>
<text x="858.4" y="277.4" font-size="13" text-anchor="middle" fill="#d02838" font-family="Liberation Sans">2</text>
</svg>
<div class="a" style="left:952px;top:32px;width:146px;height:519px;background:#fff"></div>
<div class="a" style="left:1094.5px;top:33px;width:3.5px;height:367px;background:#c6c6c6"></div>
<div class="a" style="left:1094.5px;top:400px;width:3.5px;height:151px;background:#f1f1f1"></div>
<svg class="a" style="left:1087px;top:35px" width="9" height="9"><path d="M1 1L8 8M8 1L1 8" stroke="#222" stroke-width="1.2"/></svg>
<div class="a" style="left:957.5px;top:41.5px;font-size:7.9px;line-height:10px;font-weight:bold;color:#222;white-space:nowrap">导图风格</div>
<div class="a" style="left:958.8px;top:55.5px;font-size:7.4px;line-height:9px;color:#333;white-space:nowrap;font-weight:normal">经典</div>
<div class="a" style="left:1026.3px;top:55.5px;font-size:7.4px;line-height:9px;color:#333;white-space:nowrap;font-weight:normal">流行</div>
<div class="a" style="left:958.8px;top:66.6px;width:60.5px;height:40.7px;background:#fff;border:1px solid #ececec;border-radius:4px;box-shadow:0 0.5px 1.5px rgba(0,0,0,0.06)"></div>
<svg class="a" style="left:958.8px;top:66.6px" width="60.5" height="40.7" viewBox="0 0 60.5 40.7"><rect x="3.7" y="17.1" width="19.7" height="6.3" rx="3.1" fill="#2f9d58" stroke="#2f9d58" stroke-width="0.8"/><text x="13.5" y="21.8" font-size="3.9" font-weight="bold" fill="#fff" text-anchor="middle">中心主题</text><path d="M23.4 20.2H27.5M27.5 12V28.5M27.5 12H32M27.5 28.5H32" fill="none" stroke="#999" stroke-width="0.5"/><rect x="32" y="9.7" width="8.2" height="4.6" rx="1.2" fill="#e05563" stroke="#e05563" stroke-width="0.6"/><text x="36" y="13.2" font-size="3.2" font-weight="bold" fill="#fff" text-anchor="middle">主题</text><path d="M40 12H46M46 7.7V16.3M46 7.7H50M46 12H50M46 16.3H50" fill="none" stroke="#999" stroke-width="0.5"/><circle cx="51.6" cy="7.7" r="0.6" fill="#888"/><rect x="53" y="6.8" width="3.2" height="1.8" fill="#888" opacity="0.5"/><circle cx="51.6" cy="12" r="0.6" fill="#888"/><rect x="53" y="11.1" width="3.2" height="1.8" fill="#888" opacity="0.5"/><circle cx="51.6" cy="16.3" r="0.6" fill="#888"/><rect x="53" y="15.4" width="3.2" height="1.8" fill="#888" opacity="0.5"/><rect x="32" y="26.2" width="8.2" height="4.6" rx="1.2" fill="#f4e16c" stroke="#f4e16c" stroke-width="0.6"/><text x="36" y="29.7" font-size="3.2" font-weight="bold" fill="#fff" text-anchor="middle">主题</text><path d="M40 28.5H46M46 24.2V32.8M46 24.2H50M46 28.5H50M46 32.8H50" fill="none" stroke="#999" stroke-width="0.5"/><circle cx="51.6" cy="24.2" r="0.6" fill="#888"/><rect x="53" y="23.3" width="3.2" height="1.8" fill="#888" opacity="0.5"/><circle cx="51.6" cy="28.5" r="0.6" fill="#888"/><rect x="53" y="27.6" width="3.2" height="1.8" fill="#888" opacity="0.5"/><circle cx="51.6" cy="32.8" r="0.6" fill="#888"/><rect x="53" y="31.9" width="3.2" height="1.8" fill="#888" opacity="0.5"/></svg>
<div class="a" style="left:1026.3px;top:66.6px;width:60.5px;height:40.7px;background:#fff;border:1px solid #ececec;border-radius:4px;box-shadow:0 0.5px 1.5px rgba(0,0,0,0.06)"></div>
<svg class="a" style="left:1026.3px;top:66.6px" width="60.5" height="40.7" viewBox="0 0 60.5 40.7"><rect x="3.7" y="17.1" width="19.7" height="6.3" rx="3.1" fill="#fdf1ea" stroke="#e4a486" stroke-width="0.8"/><text x="13.5" y="21.8" font-size="3.9" font-weight="bold" fill="#333" text-anchor="middle">中心主题</text><path d="M23.4 20.2H27.5M27.5 12V28.5M27.5 12H32M27.5 28.5H32" fill="none" stroke="#999" stroke-width="0.5"/><rect x="32" y="9.7" width="8.2" height="4.6" rx="1.2" fill="#f078a6" stroke="#f078a6" stroke-width="0.6"/><text x="36" y="13.2" font-size="3.2" font-weight="bold" fill="#fff" text-anchor="middle">主题</text><path d="M40 12H46M46 7.7V16.3M46 7.7H50M46 12H50M46 16.3H50" fill="none" stroke="#999" stroke-width="0.5"/><circle cx="51.6" cy="7.7" r="0.6" fill="#888"/><rect x="53" y="6.8" width="3.2" height="1.8" fill="#888" opacity="0.5"/><circle cx="51.6" cy="12" r="0.6" fill="#888"/><rect x="53" y="11.1" width="3.2" height="1.8" fill="#888" opacity="0.5"/><circle cx="51.6" cy="16.3" r="0.6" fill="#888"/><rect x="53" y="15.4" width="3.2" height="1.8" fill="#888" opacity="0.5"/><rect x="32" y="26.2" width="8.2" height="4.6" rx="1.2" fill="#5b7ef0" stroke="#5b7ef0" stroke-width="0.6"/><text x="36" y="29.7" font-size="3.2" font-weight="bold" fill="#fff" text-anchor="middle">主题</text><path d="M40 28.5H46M46 24.2V32.8M46 24.2H50M46 28.5H50M46 32.8H50" fill="none" stroke="#999" stroke-width="0.5"/><circle cx="51.6" cy="24.2" r="0.6" fill="#888"/><rect x="53" y="23.3" width="3.2" height="1.8" fill="#888" opacity="0.5"/><circle cx="51.6" cy="28.5" r="0.6" fill="#888"/><rect x="53" y="27.6" width="3.2" height="1.8" fill="#888" opacity="0.5"/><circle cx="51.6" cy="32.8" r="0.6" fill="#888"/><rect x="53" y="31.9" width="3.2" height="1.8" fill="#888" opacity="0.5"/></svg>
<div class="a" style="left:958.8px;top:115.5px;font-size:7.4px;line-height:9px;color:#333;white-space:nowrap;font-weight:normal">清新</div>
<div class="a" style="left:1026.3px;top:115.5px;font-size:7.4px;line-height:9px;color:#333;white-space:nowrap;font-weight:normal">幽兰</div>
<div class="a" style="left:958.8px;top:126.6px;width:60.5px;height:40.7px;background:#fff;border:1px solid #ececec;border-radius:4px;box-shadow:0 0.5px 1.5px rgba(0,0,0,0.06)"></div>
<svg class="a" style="left:958.8px;top:126.6px" width="60.5" height="40.7" viewBox="0 0 60.5 40.7"><rect x="3.7" y="17.1" width="19.7" height="6.3" rx="3.1" fill="#fff" stroke="#5db87b" stroke-width="0.8"/><text x="13.5" y="21.8" font-size="3.9" font-weight="bold" fill="#333" text-anchor="middle">中心主题</text><path d="M23.4 20.2H27.5M27.5 12V28.5M27.5 12H32M27.5 28.5H32" fill="none" stroke="#999" stroke-width="0.5"/><rect x="32" y="9.7" width="8.2" height="4.6" rx="1.2" fill="#78c890" stroke="#78c890" stroke-width="0.6"/><text x="36" y="13.2" font-size="3.2" font-weight="bold" fill="#fff" text-anchor="middle">主题</text><path d="M40 12H46M46 7.7V16.3M46 7.7H50M46 12H50M46 16.3H50" fill="none" stroke="#999" stroke-width="0.5"/><circle cx="51.6" cy="7.7" r="0.6" fill="#888"/><rect x="53" y="6.8" width="3.2" height="1.8" fill="#888" opacity="0.5"/><circle cx="51.6" cy="12" r="0.6" fill="#888"/><rect x="53" y="11.1" width="3.2" height="1.8" fill="#888" opacity="0.5"/><circle cx="51.6" cy="16.3" r="0.6" fill="#888"/><rect x="53" y="15.4" width="3.2" height="1.8" fill="#888" opacity="0.5"/><rect x="32" y="26.2" width="8.2" height="4.6" rx="1.2" fill="#78c890" stroke="#78c890" stroke-width="0.6"/><text x="36" y="29.7" font-size="3.2" font-weight="bold" fill="#fff" text-anchor="middle">主题</text><path d="M40 28.5H46M46 24.2V32.8M46 24.2H50M46 28.5H50M46 32.8H50" fill="none" stroke="#999" stroke-width="0.5"/><circle cx="51.6" cy="24.2" r="0.6" fill="#888"/><rect x="53" y="23.3" width="3.2" height="1.8" fill="#888" opacity="0.5"/><circle cx="51.6" cy="28.5" r="0.6" fill="#888"/><rect x="53" y="27.6" width="3.2" height="1.8" fill="#888" opacity="0.5"/><circle cx="51.6" cy="32.8" r="0.6" fill="#888"/><rect x="53" y="31.9" width="3.2" height="1.8" fill="#888" opacity="0.5"/></svg>
<div class="a" style="left:1026.3px;top:126.6px;width:60.5px;height:40.7px;background:#fff;border:1px solid #ececec;border-radius:4px;box-shadow:0 0.5px 1.5px rgba(0,0,0,0.06)"></div>
<svg class="a" style="left:1026.3px;top:126.6px" width="60.5" height="40.7" viewBox="0 0 60.5 40.7"><rect x="3.7" y="17.1" width="19.7" height="6.3" rx="3.1" fill="#1a71b8" stroke="#1a71b8" stroke-width="0.8"/><text x="13.5" y="21.8" font-size="3.9" font-weight="bold" fill="#fff" text-anchor="middle">中心主题</text><path d="M23.4 20.2H27.5M27.5 12V28.5M27.5 12H32M27.5 28.5H32" fill="none" stroke="#999" stroke-width="0.5"/><rect x="32" y="9.7" width="8.2" height="4.6" rx="1.2" fill="#58a8dc" stroke="#58a8dc" stroke-width="0.6"/><text x="36" y="13.2" font-size="3.2" font-weight="bold" fill="#fff" text-anchor="middle">主题</text><path d="M40 12H46M46 7.7V16.3M46 7.7H50M46 12H50M46 16.3H50" fill="none" stroke="#999" stroke-width="0.5"/><circle cx="51.6" cy="7.7" r="0.6" fill="#888"/><rect x="53" y="6.8" width="3.2" height="1.8" fill="#888" opacity="0.5"/><circle cx="51.6" cy="12" r="0.6" fill="#888"/><rect x="53" y="11.1" width="3.2" height="1.8" fill="#888" opacity="0.5"/><circle cx="51.6" cy="16.3" r="0.6" fill="#888"/><rect x="53" y="15.4" width="3.2" height="1.8" fill="#888" opacity="0.5"/><rect x="32" y="26.2" width="8.2" height="4.6" rx="1.2" fill="#58a8dc" stroke="#58a8dc" stroke-width="0.6"/><text x="36" y="29.7" font-size="3.2" font-weight="bold" fill="#fff" text-anchor="middle">主题</text><path d="M40 28.5H46M46 24.2V32.8M46 24.2H50M46 28.5H50M46 32.8H50" fill="none" stroke="#999" stroke-width="0.5"/><circle cx="51.6" cy="24.2" r="0.6" fill="#888"/><rect x="53" y="23.3" width="3.2" height="1.8" fill="#888" opacity="0.5"/><circle cx="51.6" cy="28.5" r="0.6" fill="#888"/><rect x="53" y="27.6" width="3.2" height="1.8" fill="#888" opacity="0.5"/><circle cx="51.6" cy="32.8" r="0.6" fill="#888"/><rect x="53" y="31.9" width="3.2" height="1.8" fill="#888" opacity="0.5"/></svg>
<div class="a" style="left:958.8px;top:175.5px;font-size:7.4px;line-height:9px;color:#333;white-space:nowrap;font-weight:normal">活力</div>
<div class="a" style="left:1026.3px;top:175.5px;font-size:7.4px;line-height:9px;color:#333;white-space:nowrap;font-weight:normal">复古</div>
<div class="a" style="left:958.8px;top:186.8px;width:60.5px;height:40.7px;background:#fff;border:1px solid #ececec;border-radius:4px;box-shadow:0 0.5px 1.5px rgba(0,0,0,0.06)"></div>
<svg class="a" style="left:958.8px;top:186.8px" width="60.5" height="40.7" viewBox="0 0 60.5 40.7"><rect x="3.7" y="17.1" width="19.7" height="6.3" rx="3.1" fill="#9a3ed8" stroke="#9a3ed8" stroke-width="0.8"/><text x="13.5" y="21.8" font-size="3.9" font-weight="bold" fill="#fff" text-anchor="middle">中心主题</text><path d="M23.4 20.2H27.5M27.5 12V28.5M27.5 12H32M27.5 28.5H32" fill="none" stroke="#999" stroke-width="0.5"/><rect x="32" y="9.7" width="8.2" height="4.6" rx="1.2" fill="#fff" stroke="#7b8ee8" stroke-width="0.6"/><text x="36" y="13.2" font-size="3.2" font-weight="bold" fill="#555" text-anchor="middle">主题</text><path d="M40 12H46M46 7.7V16.3M46 7.7H50M46 12H50M46 16.3H50" fill="none" stroke="#999" stroke-width="0.5"/><circle cx="51.6" cy="7.7" r="0.6" fill="#888"/><rect x="53" y="6.8" width="3.2" height="1.8" fill="#888" opacity="0.5"/><circle cx="51.6" cy="12" r="0.6" fill="#888"/><rect x="53" y="11.1" width="3.2" height="1.8" fill="#888" opacity="0.5"/><circle cx="51.6" cy="16.3" r="0.6" fill="#888"/><rect x="53" y="15.4" width="3.2" height="1.8" fill="#888" opacity="0.5"/><rect x="32" y="26.2" width="8.2" height="4.6" rx="1.2" fill="#fff" stroke="#d4e84a" stroke-width="0.6"/><text x="36" y="29.7" font-size="3.2" font-weight="bold" fill="#555" text-anchor="middle">主题</text><path d="M40 28.5H46M46 24.2V32.8M46 24.2H50M46 28.5H50M46 32.8H50" fill="none" stroke="#999" stroke-width="0.5"/><circle cx="51.6" cy="24.2" r="0.6" fill="#888"/><rect x="53" y="23.3" width="3.2" height="1.8" fill="#888" opacity="0.5"/><circle cx="51.6" cy="28.5" r="0.6" fill="#888"/><rect x="53" y="27.6" width="3.2" height="1.8" fill="#888" opacity="0.5"/><circle cx="51.6" cy="32.8" r="0.6" fill="#888"/><rect x="53" y="31.9" width="3.2" height="1.8" fill="#888" opacity="0.5"/></svg>
<div class="a" style="left:1026.3px;top:186.8px;width:60.5px;height:40.7px;background:#fff;border:1px solid #ececec;border-radius:4px;box-shadow:0 0.5px 1.5px rgba(0,0,0,0.06)"></div>
<svg class="a" style="left:1026.3px;top:186.8px" width="60.5" height="40.7" viewBox="0 0 60.5 40.7"><rect x="3.7" y="17.1" width="19.7" height="6.3" rx="3.1" fill="#fff" stroke="#444" stroke-width="0.8"/><text x="13.5" y="21.8" font-size="3.9" font-weight="bold" fill="#333" text-anchor="middle">中心主题</text><path d="M23.4 20.2H27.5M27.5 12V28.5M27.5 12H32M27.5 28.5H32" fill="none" stroke="#999" stroke-width="0.5"/><rect x="32" y="9.7" width="8.2" height="4.6" rx="1.2" fill="#fff" stroke="#666" stroke-width="0.6"/><text x="36" y="13.2" font-size="3.2" font-weight="bold" fill="#555" text-anchor="middle">主题</text><path d="M40 12H46M46 7.7V16.3M46 7.7H50M46 12H50M46 16.3H50" fill="none" stroke="#999" stroke-width="0.5"/><circle cx="51.6" cy="7.7" r="0.6" fill="#888"/><rect x="53" y="6.8" width="3.2" height="1.8" fill="#888" opacity="0.5"/><circle cx="51.6" cy="12" r="0.6" fill="#888"/><rect x="53" y="11.1" width="3.2" height="1.8" fill="#888" opacity="0.5"/><circle cx="51.6" cy="16.3" r="0.6" fill="#888"/><rect x="53" y="15.4" width="3.2" height="1.8" fill="#888" opacity="0.5"/><rect x="32" y="26.2" width="8.2" height="4.6" rx="1.2" fill="#fff" stroke="#666" stroke-width="0.6"/><text x="36" y="29.7" font-size="3.2" font-weight="bold" fill="#555" text-anchor="middle">主题</text><path d="M40 28.5H46M46 24.2V32.8M46 24.2H50M46 28.5H50M46 32.8H50" fill="none" stroke="#999" stroke-width="0.5"/><circle cx="51.6" cy="24.2" r="0.6" fill="#888"/><rect x="53" y="23.3" width="3.2" height="1.8" fill="#888" opacity="0.5"/><circle cx="51.6" cy="28.5" r="0.6" fill="#888"/><rect x="53" y="27.6" width="3.2" height="1.8" fill="#888" opacity="0.5"/><circle cx="51.6" cy="32.8" r="0.6" fill="#888"/><rect x="53" y="31.9" width="3.2" height="1.8" fill="#888" opacity="0.5"/></svg>
<div class="a" style="left:958.8px;top:235.5px;font-size:7.4px;line-height:9px;color:#333;white-space:nowrap;font-weight:normal">草原</div>
<div class="a" style="left:1026.3px;top:235.5px;font-size:7.4px;line-height:9px;color:#333;white-space:nowrap;font-weight:normal">晚秋</div>
<div class="a" style="left:958.8px;top:247px;width:60.5px;height:40.7px;background:#d4f5dc;border:1px solid #d4f5dc;border-radius:4px;box-shadow:0 0.5px 1.5px rgba(0,0,0,0.06)"></div>
<svg class="a" style="left:958.8px;top:247px" width="60.5" height="40.7" viewBox="0 0 60.5 40.7"><rect x="3.7" y="17.1" width="19.7" height="6.3" rx="3.1" fill="#fff" stroke="#2f9d58" stroke-width="0.8"/><text x="13.5" y="21.8" font-size="3.9" font-weight="bold" fill="#333" text-anchor="middle">中心主题</text><path d="M23.4 20.2H27.5M27.5 12V28.5M27.5 12H32M27.5 28.5H32" fill="none" stroke="#999" stroke-width="0.5"/><rect x="32" y="9.7" width="8.2" height="4.6" rx="1.2" fill="#fff" stroke="#5bbf9a" stroke-width="0.6"/><text x="36" y="13.2" font-size="3.2" font-weight="bold" fill="#555" text-anchor="middle">主题</text><path d="M40 12H46M46 7.7V16.3M46 7.7H50M46 12H50M46 16.3H50" fill="none" stroke="#999" stroke-width="0.5"/><circle cx="51.6" cy="7.7" r="0.6" fill="#888"/><rect x="53" y="6.8" width="3.2" height="1.8" fill="#888" opacity="0.5"/><circle cx="51.6" cy="12" r="0.6" fill="#888"/><rect x="53" y="11.1" width="3.2" height="1.8" fill="#888" opacity="0.5"/><circle cx="51.6" cy="16.3" r="0.6" fill="#888"/><rect x="53" y="15.4" width="3.2" height="1.8" fill="#888" opacity="0.5"/><rect x="32" y="26.2" width="8.2" height="4.6" rx="1.2" fill="#fff" stroke="#5bbf9a" stroke-width="0.6"/><text x="36" y="29.7" font-size="3.2" font-weight="bold" fill="#555" text-anchor="middle">主题</text><path d="M40 28.5H46M46 24.2V32.8M46 24.2H50M46 28.5H50M46 32.8H50" fill="none" stroke="#999" stroke-width="0.5"/><circle cx="51.6" cy="24.2" r="0.6" fill="#888"/><rect x="53" y="23.3" width="3.2" height="1.8" fill="#888" opacity="0.5"/><circle cx="51.6" cy="28.5" r="0.6" fill="#888"/><rect x="53" y="27.6" width="3.2" height="1.8" fill="#888" opacity="0.5"/><circle cx="51.6" cy="32.8" r="0.6" fill="#888"/><rect x="53" y="31.9" width="3.2" height="1.8" fill="#888" opacity="0.5"/></svg>
<div class="a" style="left:1026.3px;top:247px;width:60.5px;height:40.7px;background:#fae6c5;border:1px solid #fae6c5;border-radius:4px;box-shadow:0 0.5px 1.5px rgba(0,0,0,0.06)"></div>
<svg class="a" style="left:1026.3px;top:247px" width="60.5" height="40.7" viewBox="0 0 60.5 40.7"><rect x="3.7" y="17.1" width="19.7" height="6.3" rx="0.5" fill="#3d4a62" stroke="#3d4a62" stroke-width="0.8"/><text x="13.5" y="21.8" font-size="3.9" font-weight="bold" fill="#fff" text-anchor="middle">中心主题</text><path d="M23.4 20.2H27.5M27.5 12V28.5M27.5 12H32M27.5 28.5H32" fill="none" stroke="#999" stroke-width="0.5"/><rect x="32" y="9.7" width="8.2" height="4.6" rx="1.2" fill="#fff" stroke="#e06a78" stroke-width="0.6"/><text x="36" y="13.2" font-size="3.2" font-weight="bold" fill="#555" text-anchor="middle">主题</text><path d="M40 12H46M46 7.7V16.3M46 7.7H50M46 12H50M46 16.3H50" fill="none" stroke="#999" stroke-width="0.5"/><circle cx="51.6" cy="7.7" r="0.6" fill="#888"/><rect x="53" y="6.8" width="3.2" height="1.8" fill="#888" opacity="0.5"/><circle cx="51.6" cy="12" r="0.6" fill="#888"/><rect x="53" y="11.1" width="3.2" height="1.8" fill="#888" opacity="0.5"/><circle cx="51.6" cy="16.3" r="0.6" fill="#888"/><rect x="53" y="15.4" width="3.2" height="1.8" fill="#888" opacity="0.5"/><rect x="32" y="26.2" width="8.2" height="4.6" rx="1.2" fill="#fff" stroke="#888" stroke-width="0.6"/><text x="36" y="29.7" font-size="3.2" font-weight="bold" fill="#555" text-anchor="middle">主题</text><path d="M40 28.5H46M46 24.2V32.8M46 24.2H50M46 28.5H50M46 32.8H50" fill="none" stroke="#999" stroke-width="0.5"/><circle cx="51.6" cy="24.2" r="0.6" fill="#888"/><rect x="53" y="23.3" width="3.2" height="1.8" fill="#888" opacity="0.5"/><circle cx="51.6" cy="28.5" r="0.6" fill="#888"/><rect x="53" y="27.6" width="3.2" height="1.8" fill="#888" opacity="0.5"/><circle cx="51.6" cy="32.8" r="0.6" fill="#888"/><rect x="53" y="31.9" width="3.2" height="1.8" fill="#888" opacity="0.5"/></svg>
<div class="a" style="left:958.8px;top:296.5px;font-size:7.4px;line-height:9px;color:#333;white-space:nowrap;font-weight:normal">暗夜</div>
<div class="a" style="left:1026.3px;top:296.5px;font-size:7.4px;line-height:9px;color:#333;white-space:nowrap;font-weight:normal">梦幻</div>
<div class="a" style="left:958.8px;top:308.4px;width:60.5px;height:40.7px;background:#7b7b7b;border:1px solid #7b7b7b;border-radius:4px;box-shadow:0 0.5px 1.5px rgba(0,0,0,0.06)"></div>
<svg class="a" style="left:958.8px;top:308.4px" width="60.5" height="40.7" viewBox="0 0 60.5 40.7"><rect x="3.7" y="17.1" width="19.7" height="6.3" rx="3.1" fill="#555" stroke="#555" stroke-width="0.8"/><text x="13.5" y="21.8" font-size="3.9" font-weight="bold" fill="#fff" text-anchor="middle">中心主题</text><path d="M23.4 20.2H27.5M27.5 12V28.5M27.5 12H32M27.5 28.5H32" fill="none" stroke="#cfcfcf" stroke-width="0.5"/><rect x="32" y="9.7" width="8.2" height="4.6" rx="1.2" fill="#7b7b7b" stroke="#7b7b7b" stroke-width="0.6"/><text x="36" y="13.2" font-size="3.2" font-weight="bold" fill="#fff" text-anchor="middle">主题</text><path d="M40 12H46M46 7.7V16.3M46 7.7H50M46 12H50M46 16.3H50" fill="none" stroke="#cfcfcf" stroke-width="0.5"/><circle cx="51.6" cy="7.7" r="0.6" fill="#eee"/><rect x="53" y="6.8" width="3.2" height="1.8" fill="#eee" opacity="0.5"/><circle cx="51.6" cy="12" r="0.6" fill="#eee"/><rect x="53" y="11.1" width="3.2" height="1.8" fill="#eee" opacity="0.5"/><circle cx="51.6" cy="16.3" r="0.6" fill="#eee"/><rect x="53" y="15.4" width="3.2" height="1.8" fill="#eee" opacity="0.5"/><rect x="32" y="26.2" width="8.2" height="4.6" rx="1.2" fill="#7b7b7b" stroke="#7b7b7b" stroke-width="0.6"/><text x="36" y="29.7" font-size="3.2" font-weight="bold" fill="#fff" text-anchor="middle">主题</text><path d="M40 28.5H46M46 24.2V32.8M46 24.2H50M46 28.5H50M46 32.8H50" fill="none" stroke="#cfcfcf" stroke-width="0.5"/><circle cx="51.6" cy="24.2" r="0.6" fill="#eee"/><rect x="53" y="23.3" width="3.2" height="1.8" fill="#eee" opacity="0.5"/><circle cx="51.6" cy="28.5" r="0.6" fill="#eee"/><rect x="53" y="27.6" width="3.2" height="1.8" fill="#eee" opacity="0.5"/><circle cx="51.6" cy="32.8" r="0.6" fill="#eee"/><rect x="53" y="31.9" width="3.2" height="1.8" fill="#eee" opacity="0.5"/></svg>
<div class="a" style="left:1026.3px;top:308.4px;width:60.5px;height:40.7px;background:#000;border:1px solid #000;border-radius:4px;box-shadow:0 0.5px 1.5px rgba(0,0,0,0.06)"></div>
<svg class="a" style="left:1026.3px;top:308.4px" width="60.5" height="40.7" viewBox="0 0 60.5 40.7"><rect x="3.7" y="17.1" width="19.7" height="6.3" rx="0.5" fill="#000" stroke="#c8dc58" stroke-width="0.8"/><text x="13.5" y="21.8" font-size="3.9" font-weight="bold" fill="#fff" text-anchor="middle">中心主题</text><path d="M23.4 20.2H27.5M27.5 12V28.5M27.5 12H32M27.5 28.5H32" fill="none" stroke="#000" stroke-width="0.5"/><rect x="32" y="9.7" width="8.2" height="4.6" rx="1.2" fill="#000" stroke="#000" stroke-width="0.6"/><text x="36" y="13.2" font-size="3.2" font-weight="bold" fill="#fff" text-anchor="middle">主题</text><path d="M40 12H46M46 7.7V16.3M46 7.7H50M46 12H50M46 16.3H50" fill="none" stroke="#000" stroke-width="0.5"/><circle cx="51.6" cy="7.7" r="0.6" fill="#eee"/><rect x="53" y="6.8" width="3.2" height="1.8" fill="#eee" opacity="0.5"/><circle cx="51.6" cy="12" r="0.6" fill="#eee"/><rect x="53" y="11.1" width="3.2" height="1.8" fill="#eee" opacity="0.5"/><circle cx="51.6" cy="16.3" r="0.6" fill="#eee"/><rect x="53" y="15.4" width="3.2" height="1.8" fill="#eee" opacity="0.5"/><rect x="32" y="26.2" width="8.2" height="4.6" rx="1.2" fill="#000" stroke="#000" stroke-width="0.6"/><text x="36" y="29.7" font-size="3.2" font-weight="bold" fill="#fff" text-anchor="middle">主题</text><path d="M40 28.5H46M46 24.2V32.8M46 24.2H50M46 28.5H50M46 32.8H50" fill="none" stroke="#000" stroke-width="0.5"/><circle cx="51.6" cy="24.2" r="0.6" fill="#eee"/><rect x="53" y="23.3" width="3.2" height="1.8" fill="#eee" opacity="0.5"/><circle cx="51.6" cy="28.5" r="0.6" fill="#eee"/><rect x="53" y="27.6" width="3.2" height="1.8" fill="#eee" opacity="0.5"/><circle cx="51.6" cy="32.8" r="0.6" fill="#eee"/><rect x="53" y="31.9" width="3.2" height="1.8" fill="#eee" opacity="0.5"/></svg>
<div class="a" style="left:958.6px;top:356.5px;font-size:6.8px;line-height:9px;color:#333;white-space:nowrap;font-weight:normal">括号图向右横板四</div>
<div class="a" style="left:958.3px;top:367.8px;width:61.8px;height:42px;background:#fff;border:1px solid #7fa3e2;border-radius:4px"></div>
<svg class="a" style="left:958.3px;top:367.8px" width="62" height="42" viewBox="0 0 62 42"><rect x="3.7" y="4.4" width="54.3" height="33.7" fill="#fbfcec" stroke="#777" stroke-width="0.6"/><rect x="4" y="18.4" width="18.5" height="5.8" fill="#e0f4f4" stroke="#8cd" stroke-width="0.3"/><text x="13.2" y="22.6" font-size="3.6" fill="#2a8fb0" text-anchor="middle">中心主题</text><path d="M22.5 21.3H28.5M28.5 12.8V29.2M28.5 12.8H32M28.5 29.2H32" fill="none" stroke="#777" stroke-width="0.5"/><ellipse cx="36.6" cy="12.8" rx="4.6" ry="2.3" fill="#c6ecec" stroke="#3bb" stroke-width="0.5"/><path d="M41.2 12.8H46M46 7.800000000000001V17.8M46 7.800000000000001H50M46 12.8H50M46 17.8H50M57.5 6.800000000000001V18.8" fill="none" stroke="#777" stroke-width="0.45"/><rect x="50" y="6.800000000000001" width="6" height="2" fill="none" stroke="#4bb" stroke-width="0.3"/><rect x="50" y="9.3" width="6" height="2" fill="none" stroke="#4bb" stroke-width="0.3"/><rect x="50" y="11.8" width="6" height="2" fill="none" stroke="#4bb" stroke-width="0.3"/><rect x="50" y="14.3" width="6" height="2" fill="none" stroke="#4bb" stroke-width="0.3"/><rect x="50" y="16.8" width="6" height="2" fill="none" stroke="#4bb" stroke-width="0.3"/><ellipse cx="36.6" cy="29.2" rx="4.6" ry="2.3" fill="#c6ecec" stroke="#3bb" stroke-width="0.5"/><path d="M41.2 29.2H46M46 24.2V34.2M46 24.2H50M46 29.2H50M46 34.2H50M57.5 23.2V35.2" fill="none" stroke="#777" stroke-width="0.45"/><rect x="50" y="23.2" width="6" height="2" fill="none" stroke="#4bb" stroke-width="0.3"/><rect x="50" y="25.7" width="6" height="2" fill="none" stroke="#4bb" stroke-width="0.3"/><rect x="50" y="28.2" width="6" height="2" fill="none" stroke="#4bb" stroke-width="0.3"/><rect x="50" y="30.7" width="6" height="2" fill="none" stroke="#4bb" stroke-width="0.3"/><rect x="50" y="33.2" width="6" height="2" fill="none" stroke="#4bb" stroke-width="0.3"/></svg>
<div class="a" style="left:957.4px;top:422.5px;font-size:7.9px;line-height:10px;font-weight:bold;color:#222;white-space:nowrap">颜色排布</div>
<div class="a" style="left:958.4px;top:437px;width:20.0px;height:19.3px;border-radius:4px;background:#fff;border:1px solid #f0f0f0;color:#555;box-shadow:0 0 1px rgba(0,0,0,0.05);font-size:7px;line-height:17.3px;text-align:center;white-space:nowrap">分支</div>
<div class="a" style="left:984.8px;top:437px;width:21.8px;height:19.3px;border-radius:4px;background:#e8f1fc;border:1px solid #7fa3e2;color:#555;font-size:7px;line-height:17.3px;text-align:center;white-space:nowrap">级别</div>
<div class="a" style="left:1012.5px;top:437px;width:21.0px;height:19.3px;border-radius:4px;background:#fff;border:1px solid #f0f0f0;color:#555;box-shadow:0 0 1px rgba(0,0,0,0.05);font-size:7px;line-height:17.3px;text-align:center;white-space:nowrap">独立</div>
<div class="a" style="left:1039.5px;top:437px;width:21.0px;height:19.3px;border-radius:4px;background:#fff;border:1px solid #f0f0f0;color:#555;box-shadow:0 0 1px rgba(0,0,0,0.05);font-size:7px;line-height:17.3px;text-align:center;white-space:nowrap">单色</div>
<div class="a" style="left:1067.5px;top:437px;width:22.5px;height:19.3px;border-radius:4px;background:#fff;border:1px solid #f0f0f0;color:#555;box-shadow:0 0 1px rgba(0,0,0,0.05);font-size:7px;line-height:17.3px;text-align:center;white-space:nowrap">交替</div>
<div class="a" style="left:957.4px;top:465.5px;font-size:7.9px;line-height:10px;font-weight:bold;color:#222;white-space:nowrap">配色方案</div>
<div class="a" style="left:957.4px;top:495.3px;width:131px;height:16px;background:#e9f2fc;border:1px solid #7fa3e2;border-radius:3px"></div>
<div class="a" style="left:967.20px;top:484.3px;width:6.6px;height:6.6px;background:#2ea44f;border-radius:0.8px"></div>
<div class="a" style="left:975.07px;top:484.3px;width:6.6px;height:6.6px;background:#e8262c;border-radius:0.8px"></div>
<div class="a" style="left:982.94px;top:484.3px;width:6.6px;height:6.6px;background:#f5b800;border-radius:0.8px"></div>
<div class="a" style="left:990.81px;top:484.3px;width:6.6px;height:6.6px;background:#3b4de0;border-radius:0.8px"></div>
<div class="a" style="left:998.68px;top:484.3px;width:6.6px;height:6.6px;background:#f0801e;border-radius:0.8px"></div>
<div class="a" style="left:1006.55px;top:484.3px;width:6.6px;height:6.6px;background:#7a5ae0;border-radius:0.8px"></div>
<div class="a" style="left:1014.42px;top:484.3px;width:6.6px;height:6.6px;background:#ef4a3a;border-radius:0.8px"></div>
<div class="a" style="left:1022.29px;top:484.3px;width:6.6px;height:6.6px;background:#3d8cf0;border-radius:0.8px"></div>
<div class="a" style="left:1030.16px;top:484.3px;width:6.6px;height:6.6px;background:#e2189a;border-radius:0.8px"></div>
<div class="a" style="left:1038.03px;top:484.3px;width:6.6px;height:6.6px;background:#22a8f0;border-radius:0.8px"></div>
<div class="a" style="left:1052px;top:483.1px;font-size:7px;line-height:9px;color:#444;white-space:nowrap">缤纷彩韵</div>
<div class="a" style="left:967.20px;top:499.6px;width:6.6px;height:6.6px;background:#f57a30;border-radius:0.8px"></div>
<div class="a" style="left:975.07px;top:499.6px;width:6.6px;height:6.6px;background:#e84aa0;border-radius:0.8px"></div>
<div class="a" style="left:982.94px;top:499.6px;width:6.6px;height:6.6px;background:#2f6ae8;border-radius:0.8px"></div>
<div class="a" style="left:990.81px;top:499.6px;width:6.6px;height:6.6px;background:#74ad40;border-radius:0.8px"></div>
<div class="a" style="left:998.68px;top:499.6px;width:6.6px;height:6.6px;background:#e83a3a;border-radius:0.8px"></div>
<div class="a" style="left:1006.55px;top:499.6px;width:6.6px;height:6.6px;background:#20b0ee;border-radius:0.8px"></div>
<div class="a" style="left:1014.42px;top:499.6px;width:6.6px;height:6.6px;background:#7a35e0;border-radius:0.8px"></div>
<div class="a" style="left:1022.29px;top:499.6px;width:6.6px;height:6.6px;background:#b060f0;border-radius:0.8px"></div>
<div class="a" style="left:1030.16px;top:499.6px;width:6.6px;height:6.6px;background:#2ea44f;border-radius:0.8px"></div>
<div class="a" style="left:1038.03px;top:499.6px;width:6.6px;height:6.6px;background:#f5b22a;border-radius:0.8px"></div>
<div class="a" style="left:1052px;top:498.40000000000003px;font-size:7px;line-height:9px;color:#444;white-space:nowrap">多彩乐章</div>
<div class="a" style="left:967.20px;top:516.3px;width:6.6px;height:6.6px;background:#f08038;border-radius:0.8px"></div>
<div class="a" style="left:975.07px;top:516.3px;width:6.6px;height:6.6px;background:#3a9ae0;border-radius:0.8px"></div>
<div class="a" style="left:982.94px;top:516.3px;width:6.6px;height:6.6px;background:#2fb89a;border-radius:0.8px"></div>
<div class="a" style="left:990.81px;top:516.3px;width:6.6px;height:6.6px;background:#d07090;border-radius:0.8px"></div>
<div class="a" style="left:998.68px;top:516.3px;width:6.6px;height:6.6px;background:#98a4b0;border-radius:0.8px"></div>
<div class="a" style="left:1006.55px;top:516.3px;width:6.6px;height:6.6px;background:#4a78a8;border-radius:0.8px"></div>
<div class="a" style="left:1014.42px;top:516.3px;width:6.6px;height:6.6px;background:#20a8c0;border-radius:0.8px"></div>
<div class="a" style="left:1022.29px;top:516.3px;width:6.6px;height:6.6px;background:#e06060;border-radius:0.8px"></div>
<div class="a" style="left:1030.16px;top:516.3px;width:6.6px;height:6.6px;background:#f5b020;border-radius:0.8px"></div>
<div class="a" style="left:1038.03px;top:516.3px;width:6.6px;height:6.6px;background:#b098c0;border-radius:0.8px"></div>
<div class="a" style="left:1052px;top:515.0999999999999px;font-size:7px;line-height:9px;color:#444;white-space:nowrap">雅致彩境</div>
<div class="a" style="left:967.20px;top:531.9px;width:6.6px;height:6.6px;background:#0b5a9a;border-radius:0.8px"></div>
<div class="a" style="left:975.07px;top:531.9px;width:6.6px;height:6.6px;background:#0e66ac;border-radius:0.8px"></div>
<div class="a" style="left:982.94px;top:531.9px;width:6.6px;height:6.6px;background:#1270b8;border-radius:0.8px"></div>
<div class="a" style="left:990.81px;top:531.9px;width:6.6px;height:6.6px;background:#1a7cc4;border-radius:0.8px"></div>
<div class="a" style="left:998.68px;top:531.9px;width:6.6px;height:6.6px;background:#1f86ce;border-radius:0.8px"></div>
<div class="a" style="left:1006.55px;top:531.9px;width:6.6px;height:6.6px;background:#2490d8;border-radius:0.8px"></div>
<div class="a" style="left:1014.42px;top:531.9px;width:6.6px;height:6.6px;background:#2a9ae0;border-radius:0.8px"></div>
<div class="a" style="left:1022.29px;top:531.9px;width:6.6px;height:6.6px;background:#30a4e8;border-radius:0.8px"></div>
<div class="a" style="left:1030.16px;top:531.9px;width:6.6px;height:6.6px;background:#38acee;border-radius:0.8px"></div>
<div class="a" style="left:1038.03px;top:531.9px;width:6.6px;height:6.6px;background:#40b4f2;border-radius:0.8px"></div>
<div class="a" style="left:1052px;top:530.6999999999999px;font-size:7px;line-height:9px;color:#444;white-space:nowrap">冰蓝秘境</div>
<div class="a" style="left:967.20px;top:548px;width:6.6px;height:6.6px;background:#1a6a5a;border-radius:0.8px"></div>
<div class="a" style="left:975.07px;top:548px;width:6.6px;height:6.6px;background:#2a8070;border-radius:0.8px"></div>
<div class="a" style="left:982.94px;top:548px;width:6.6px;height:6.6px;background:#4a9888;border-radius:0.8px"></div>
<div class="a" style="left:990.81px;top:548px;width:6.6px;height:6.6px;background:#80b0a0;border-radius:0.8px"></div>
<div class="a" style="left:998.68px;top:548px;width:6.6px;height:6.6px;background:#a0c8b8;border-radius:0.8px"></div>
<div class="a" style="left:1006.55px;top:548px;width:6.6px;height:6.6px;background:#c0d8d0;border-radius:0.8px"></div>
<div class="a" style="left:1014.42px;top:548px;width:6.6px;height:6.6px;background:#98c0b0;border-radius:0.8px"></div>
<div class="a" style="left:1022.29px;top:548px;width:6.6px;height:6.6px;background:#78a898;border-radius:0.8px"></div>
<div class="a" style="left:1030.16px;top:548px;width:6.6px;height:6.6px;background:#589080;border-radius:0.8px"></div>
<div class="a" style="left:1038.03px;top:548px;width:6.6px;height:6.6px;background:#407868;border-radius:0.8px"></div>
<div class="a" style="left:1052px;top:546.8px;font-size:7px;line-height:9px;color:#444;white-space:nowrap">幽竹水韵</div>
</body></html>
